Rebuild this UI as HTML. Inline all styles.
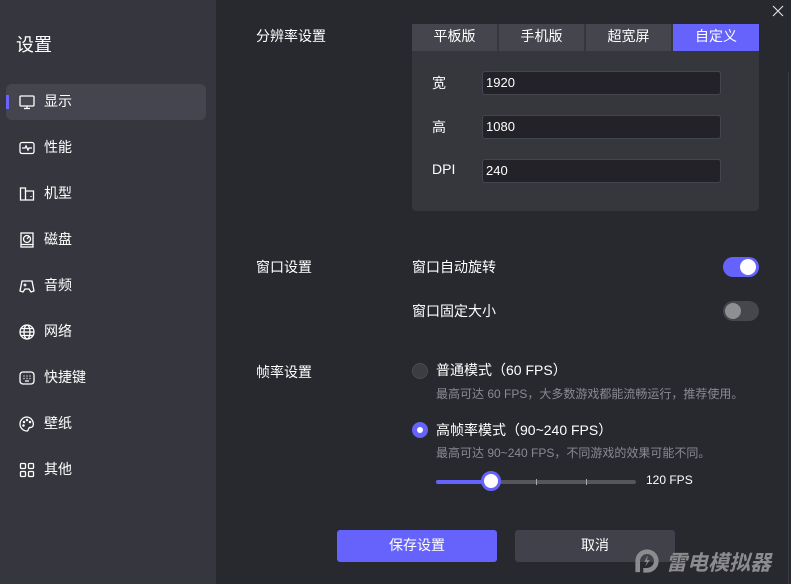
<!DOCTYPE html>
<html><head><meta charset="utf-8"><style>
*{margin:0;padding:0;box-sizing:border-box}
body{width:791px;height:584px;overflow:hidden;background:#28282f;font-family:"Liberation Sans","Noto Sans CJK SC",sans-serif;color:#fff;position:relative;font-size:13px}
.a{position:absolute}
.side{left:0;top:0;width:216px;height:584px;background:#36373e}
.item{position:absolute;left:6px;width:200px;height:36px;line-height:34px;padding-left:38px;font-size:14px;color:#fff}
.item svg{position:absolute;left:13px;top:10px}
.sel{background:#44454e;border-radius:6px}
.tab{position:absolute;top:24px;height:27px;line-height:24px;text-align:center;font-size:14px;background:#45464d;width:85px}
.inp{position:absolute;left:482px;width:239px;height:24px;background:#222228;border:1px solid #44464f;border-radius:3px;padding-left:3px;line-height:21px;font-size:13px}
.lbl{position:absolute;font-size:14px;margin-top:-2px}
.gray{color:#8a8b92;font-size:12px;margin-top:-2px}
</style></head><body>
<div class="a side"></div>
<div class="a" style="left:16px;top:31px;font-size:18px">设置</div>
<div class="item sel" style="top:84px"><svg width="16" height="16" viewBox="0 0 16 16" fill="none" stroke="#fff" stroke-width="1.3"><rect x="1" y="2" width="14" height="10" rx="1"/><path d="M5 14.5h6M8 12v2.5"/></svg>显示</div>
<div class="a" style="left:6px;top:95px;width:3px;height:14px;background:#6c63ff"></div>
<div class="item" style="top:130px"><svg width="16" height="16" viewBox="0 0 16 16" fill="none" stroke="#fff" stroke-width="1.3"><rect x="1" y="2.5" width="14" height="11" rx="2"/><path d="M3 8h3l1-2 2 4 1-2h3"/></svg>性能</div>
<div class="item" style="top:176px"><svg width="16" height="16" viewBox="0 0 16 16" fill="none" stroke="#fff" stroke-width="1.3"><path d="M1.5 2h5v3h8v9h-13z"/><path d="M6.5 5v9M12 10v1"/></svg>机型</div>
<div class="item" style="top:222px"><svg width="16" height="16" viewBox="0 0 16 16" fill="none" stroke="#fff" stroke-width="1.3"><rect x="2" y="1" width="12" height="14"/><circle cx="8" cy="7" r="3.5"/><path d="M8 7l2-2.5M2 12.5h12"/></svg>磁盘</div>
<div class="item" style="top:268px"><svg width="16" height="16" viewBox="0 0 16 16" fill="none" stroke="#fff" stroke-width="1.3"><path d="M3 3h10l2 10-3 1-2-3H6l-2 3-3-1z"/><path d="M4.5 7h3M6 5.5v3M10 6.5v0M11.5 8v0"/></svg>音频</div>
<div class="item" style="top:314px"><svg width="16" height="16" viewBox="0 0 16 16" fill="none" stroke="#fff" stroke-width="1.3"><circle cx="8" cy="8" r="7"/><ellipse cx="8" cy="8" rx="3" ry="7"/><path d="M1 8h14M2 4.5h12M2 11.5h12"/></svg>网络</div>
<div class="item" style="top:360px"><svg width="16" height="16" viewBox="0 0 16 16" fill="none" stroke="#fff" stroke-width="1.3"><rect x="1" y="2" width="14" height="12" rx="3"/><path d="M4.5 6h1M7.5 6h1M10.5 6h1M4.5 8.5h1M7.5 8.5h1M10.5 8.5h1M6 11h4"/></svg>快捷键</div>
<div class="item" style="top:406px"><svg width="16" height="16" viewBox="0 0 16 16" fill="none" stroke="#fff" stroke-width="1.3"><path d="M8 1a7 7 0 1 0 0 14c1.5 0 1-2 2-3s3 0 4-2A7 7 0 0 0 8 1z"/><circle cx="5" cy="6" r=".6"/><circle cx="8" cy="4" r=".6"/><circle cx="11" cy="6" r=".6"/><circle cx="4.5" cy="9.5" r=".6"/></svg>壁纸</div>
<div class="item" style="top:452px"><svg width="16" height="16" viewBox="0 0 16 16" fill="none" stroke="#fff" stroke-width="1.3"><rect x="1.5" y="1.5" width="5" height="5" rx="1"/><rect x="9.5" y="1.5" width="5" height="5" rx="1"/><rect x="1.5" y="9.5" width="5" height="5" rx="1"/><rect x="9.5" y="9.5" width="5" height="5" rx="1"/></svg>其他</div>

<svg class="a" style="left:772px;top:5px" width="12" height="12" viewBox="0 0 12 12" stroke="#ddd" stroke-width="1.2"><path d="M1 1l10 10M11 1L1 11"/></svg>
<div class="a" style="left:788px;top:72px;width:1px;height:512px;background:#3a3a42"></div>

<div class="lbl" style="left:256px;top:28px">分辨率设置</div>
<div class="a" style="left:412px;top:24px;width:347px;height:187px;background:#36363d;border-radius:4px"></div>
<div class="tab" style="left:412px">平板版</div>
<div class="tab" style="left:499px">手机版</div>
<div class="tab" style="left:586px">超宽屏</div>
<div class="tab" style="left:673px;width:86px;background:#6563fb">自定义</div>
<div class="lbl" style="left:432px;top:75px">宽</div>
<div class="inp" style="top:71px">1920</div>
<div class="lbl" style="left:432px;top:119px">高</div>
<div class="inp" style="top:115px">1080</div>
<div class="lbl" style="left:432px;top:163px">DPI</div>
<div class="inp" style="top:159px">240</div>

<div class="lbl" style="left:256px;top:259px">窗口设置</div>
<div class="lbl" style="left:412px;top:259px">窗口自动旋转</div>
<div class="a" style="left:723px;top:257px;width:36px;height:20px;border-radius:10px;background:#6563fb"></div>
<div class="a" style="left:740px;top:259px;width:16px;height:16px;border-radius:50%;background:#fff"></div>
<div class="lbl" style="left:412px;top:303px">窗口固定大小</div>
<div class="a" style="left:723px;top:301px;width:36px;height:20px;border-radius:10px;background:#46464d"></div>
<div class="a" style="left:725px;top:303px;width:16px;height:16px;border-radius:50%;background:#8e8e93"></div>

<div class="lbl" style="left:256px;top:364px">帧率设置</div>
<div class="a" style="left:412px;top:363px;width:16px;height:16px;border-radius:50%;background:#3c3c42;border:1px solid #4a4a50"></div>
<div class="lbl" style="left:436px;top:362px">普通模式（60 FPS）</div>
<div class="a gray" style="left:436px;top:387px">最高可达 60 FPS，大多数游戏都能流畅运行，推荐使用。</div>
<div class="a" style="left:412px;top:422px;width:16px;height:16px;border-radius:50%;background:#6563fb"></div>
<div class="a" style="left:417px;top:427px;width:6px;height:6px;border-radius:50%;background:#fff"></div>
<div class="lbl" style="left:436px;top:422px">高帧率模式（90~240 FPS）</div>
<div class="a gray" style="left:436px;top:446px">最高可达 90~240 FPS，不同游戏的效果可能不同。</div>
<div class="a" style="left:436px;top:480px;width:200px;height:4px;border-radius:2px;background:#55555b"></div>
<div class="a" style="left:436px;top:480px;width:55px;height:4px;border-radius:2px;background:#6563fb"></div>
<div class="a" style="left:536px;top:479px;width:1px;height:6px;background:#aaa"></div>
<div class="a" style="left:586px;top:479px;width:1px;height:6px;background:#aaa"></div>
<div class="a" style="left:481px;top:471px;width:20px;height:20px;border-radius:50%;background:#fff;border:3px solid #6563fb"></div>
<div class="a" style="left:646px;top:473px;font-size:12px">120 FPS</div>

<div class="a" style="left:337px;top:530px;width:160px;height:32px;background:#6563fb;border-radius:3px;text-align:center;line-height:30px;font-size:14px">保存设置</div>
<div class="a" style="left:515px;top:530px;width:160px;height:32px;background:#40414a;border-radius:3px;text-align:center;line-height:30px;font-size:14px">取消</div>
<svg class="a" style="left:634px;top:548px" width="26" height="26" viewBox="0 0 28 28"><path d="M4 26V14A10 10 0 1 1 14 24H10" fill="none" stroke="#8c8c90" stroke-width="5"/><path d="M15 8l-4 7h3l-2 5 5-7h-3z" fill="#8c8c90"/></svg>
<div class="a" style="left:666px;top:547px;font-size:21px;font-weight:bold;color:#8c8c90;font-style:italic">雷电模拟器</div>
</body></html>
